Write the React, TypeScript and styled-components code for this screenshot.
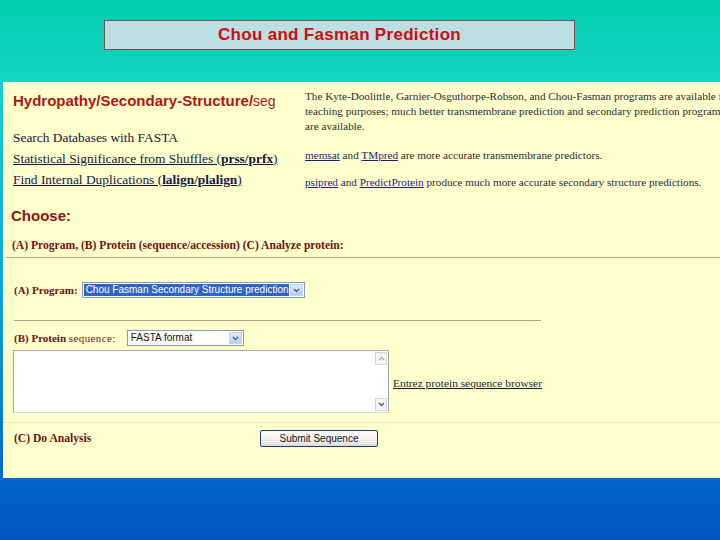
import { createGlobalStyle } from "styled-components";
import styled from "styled-components";

const GlobalStyle = createGlobalStyle`
  html, body {
    margin: 0;
    padding: 0;
    width: 720px;
    height: 540px;
    overflow: hidden;
  }
`;

const Slide = styled.div`
  width: 720px;
  height: 540px;
  display: flex;
  flex-direction: column;
  background: linear-gradient(
    180deg,
    #00cfae 0%,
    #16d2c6 16%,
    #0aa7cf 55%,
    #0068cb 88%,
    #0056bf 100%
  );
  overflow: hidden;
`;

const TitleBox = styled.div`
  margin: 20px 0 0 104px;
  width: 469px;
  height: 28px;
  border: 1px solid #7a4e4e;
  background: #bcdfe3;
  display: flex;
  align-items: center;
  justify-content: center;
  font-family: "Liberation Sans", Arial, sans-serif;
  font-weight: bold;
  font-size: 17px;
  color: #d00c0c;
  letter-spacing: 0.3px;
`;

const Panel = styled.div`
  margin: 32px 0 0 3px;
  height: 396px;
  background: #ffffcc;
  overflow: hidden;
  display: flex;
  flex-direction: column;
`;

const Top = styled.div`
  display: grid;
  grid-template-columns: 292px 1fr;
  padding: 9px 0 0 10px;
  height: 112px;
`;

const LeftCol = styled.div`
  display: flex;
  flex-direction: column;
`;

const Heading = styled.div<{ $size?: number; $color?: string }>`
  font-family: "Liberation Sans", Arial, sans-serif;
  font-weight: bold;
  font-size: ${(p) => p.$size ?? 15}px;
  color: ${(p) => p.$color ?? "#b01515"};
  line-height: 20px;
  white-space: nowrap;
`;

const Seg = styled.span`
  font-weight: normal;
  font-size: 14px;
`;

const LinkList = styled.div`
  margin-top: 19px;
  display: flex;
  flex-direction: column;
  gap: 5px;
`;

const Link = styled.a<{ $plain?: boolean }>`
  font-family: "Liberation Serif", "Times New Roman", serif;
  font-size: 13.4px;
  line-height: 16px;
  color: #15154a;
  text-decoration: ${(p) => (p.$plain ? "none" : "underline")};
  white-space: nowrap;
`;

const RightCol = styled.div`
  margin-top: -2px;
  font-family: "Liberation Serif", "Times New Roman", serif;
  font-size: 11.2px;
  line-height: 15px;
  color: #2a2a3a;
  white-space: nowrap;
`;

const Para = styled.p<{ $gap: number }>`
  margin: ${(p) => p.$gap}px 0 0 0;
`;

const SmallLink = styled.a`
  color: #1c1c8c;
  text-decoration: underline;
`;

const Section = styled.div`
  padding: 3px 0 0 8px;
`;

const Label = styled.div<{ $size?: number }>`
  font-family: "Liberation Serif", "Times New Roman", serif;
  font-weight: bold;
  font-size: ${(p) => p.$size ?? 11}px;
  line-height: 14px;
  color: #6e1010;
  white-space: nowrap;
`;

const Normal = styled.span`
  font-weight: normal;
  letter-spacing: 0.4px;
`;

const Rule = styled.div<{ $width?: string; $color?: string }>`
  height: 1px;
  width: ${(p) => p.$width ?? "100%"};
  background: ${(p) => p.$color ?? "#a3a38f"};
`;

const Row = styled.div`
  display: flex;
  align-items: center;
  gap: 4px;
  padding-left: 11px;
`;

const Select = styled.div<{ $width: number }>`
  width: ${(p) => p.$width}px;
  height: 16px;
  box-sizing: border-box;
  border: 1px solid #7f9db9;
  background: #fff;
  display: flex;
  align-items: stretch;
  padding: 1px;
`;

const SelectText = styled.div<{ $active?: boolean }>`
  flex: 1;
  font-family: "Liberation Sans", Arial, sans-serif;
  font-size: 10px;
  line-height: 12px;
  padding-left: 2px;
  color: ${(p) => (p.$active ? "#fff" : "#111")};
  background: ${(p) => (p.$active ? "#3163c5" : "transparent")};
  white-space: nowrap;
  overflow: hidden;
`;

const ArrowBtn = styled.div`
  width: 13px;
  margin-left: 1px;
  background: linear-gradient(180deg, #dfe8fb, #b7cbf3);
  border: 1px solid #c3d3f3;
  box-sizing: border-box;
  display: flex;
  align-items: center;
  justify-content: center;
`;

const InputRow = styled.div`
  display: flex;
  align-items: center;
  padding-left: 10px;
`;

const TextArea = styled.div`
  width: 376px;
  height: 63px;
  box-sizing: border-box;
  border: 1px solid #a5a5a5;
  border-bottom-color: #d8d8d8;
  background: #fff;
  display: flex;
  justify-content: flex-end;
`;

const ScrollTrack = styled.div`
  width: 12px;
  display: flex;
  flex-direction: column;
  justify-content: space-between;
  padding: 1px 1px 1px 0;
`;

const ScrollBtn = styled.div`
  height: 11px;
  border: 1px solid #d4d4d4;
  background: #f4f4f4;
  display: flex;
  align-items: center;
  justify-content: center;
`;

const EntrezLink = styled(Link)`
  font-size: 11.4px;
  margin-left: 4px;
  margin-top: 2px;
  color: #1a1a3a;
`;

const SubmitButton = styled.button`
  margin-left: 162px;
  width: 118px;
  height: 17px;
  padding: 0;
  border: 1px solid #1f3f6f;
  border-radius: 2px;
  background: linear-gradient(180deg, #fdfdfd, #ecebe6 80%, #d8d6cc);
  font-family: "Liberation Sans", Arial, sans-serif;
  font-size: 10px;
  color: #111;
`;

const Chevron = ({ up }: { up?: boolean }) => (
  <svg width="7" height="5" viewBox="0 0 7 5">
    <path
      d={up ? "M1 4 L3.5 1.5 L6 4" : "M1 1 L3.5 3.5 L6 1"}
      fill="none"
      stroke={up ? "#b0b0b0" : "#4d6185"}
      strokeWidth="1.3"
    />
  </svg>
);

export default function App() {
  return (
    <Slide>
      <GlobalStyle />
      <TitleBox>Chou and Fasman Prediction</TitleBox>
      <Panel>
        <Top>
          <LeftCol>
            <Heading>
              Hydropathy/Secondary-Structure/<Seg>seg</Seg>
            </Heading>
            <LinkList>
              <Link $plain>Search Databases with FASTA</Link>
              <Link>
                Statistical Significance from Shuffles (<b>prss/prfx</b>)
              </Link>
              <Link>
                Find Internal Duplications (<b>lalign/plalign</b>)
              </Link>
            </LinkList>
          </LeftCol>
          <RightCol>
            <Para $gap={0}>
              The Kyte-Doolittle, Garnier-Osguthorpe-Robson, and Chou-Fasman
              programs are available for
              <br />
              teaching purposes; much better transmembrane prediction and
              secondary prediction programs
              <br />
              are available.
            </Para>
            <Para $gap={14}>
              <SmallLink>memsat</SmallLink> and <SmallLink>TMpred</SmallLink>{" "}
              are more accurate transmembrane predictors.
            </Para>
            <Para $gap={12}>
              <SmallLink>psipred</SmallLink> and{" "}
              <SmallLink>PredictProtein</SmallLink> produce much more accurate
              secondary structure predictions.
            </Para>
          </RightCol>
        </Top>
        <Section>
          <Heading $color="#8e1414">Choose:</Heading>
          <Label $size={11.6} style={{ marginTop: 13, marginLeft: 1 }}>
            (A) Program, (B) Protein (sequence/accession) (C) Analyze protein:
          </Label>
        </Section>
        <div style={{ marginTop: 4, marginLeft: 3 }}>
          <Rule />
        </div>
        <Row style={{ marginTop: 24 }}>
          <Label>(A) Program:</Label>
          <Select $width={223}>
            <SelectText $active>
              Chou Fasman Secondary Structure prediction
            </SelectText>
            <ArrowBtn>
              <Chevron />
            </ArrowBtn>
          </Select>
        </Row>
        <div style={{ marginTop: 22, marginLeft: 11 }}>
          <Rule $width="527px" />
        </div>
        <Row style={{ marginTop: 9 }}>
          <Label>
            (B) Protein <Normal>sequence:</Normal>
          </Label>
          <Select $width={117} style={{ marginLeft: 7 }}>
            <SelectText>FASTA format</SelectText>
            <ArrowBtn>
              <Chevron />
            </ArrowBtn>
          </Select>
        </Row>
        <InputRow style={{ marginTop: 4 }}>
          <TextArea>
            <ScrollTrack>
              <ScrollBtn>
                <Chevron up />
              </ScrollBtn>
              <ScrollBtn>
                <Chevron up={false} />
              </ScrollBtn>
            </ScrollTrack>
          </TextArea>
          <EntrezLink>Entrez protein sequence browser</EntrezLink>
        </InputRow>
        <div style={{ marginTop: 9 }}>
          <Rule $color="#ebebc4" />
        </div>
        <Row style={{ marginTop: 7 }}>
          <Label $size={11.6} style={{ width: 80 }}>
            (C) Do Analysis
          </Label>
          <SubmitButton>Submit Sequence</SubmitButton>
        </Row>
      </Panel>
    </Slide>
  );
}
